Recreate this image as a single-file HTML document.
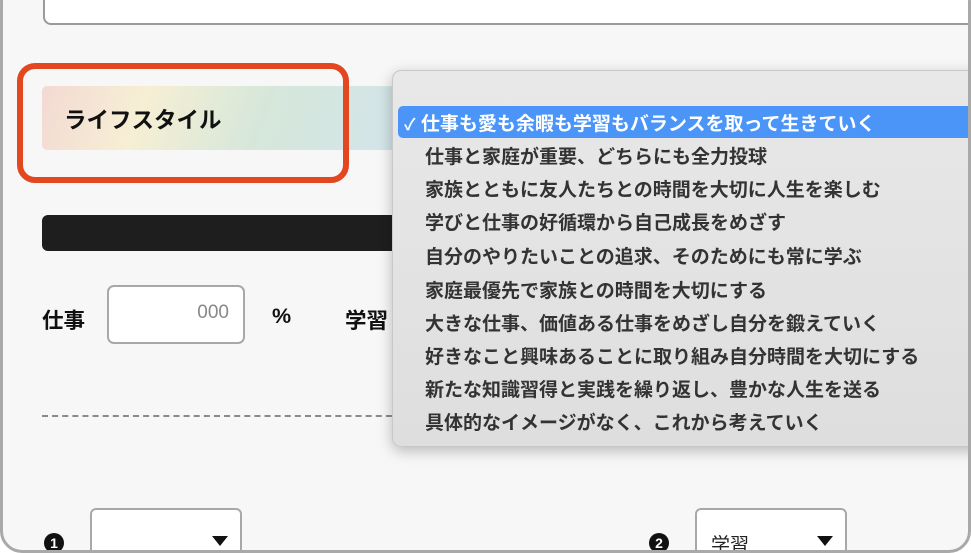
<!DOCTYPE html>
<html><head><meta charset="utf-8"><style>
body{margin:0;width:971px;height:552px;overflow:hidden;background:#fff;font-family:"Liberation Sans","Noto Sans CJK JP",sans-serif;}
.frame{position:absolute;left:0;top:-20px;width:965px;height:567px;border:3px solid #a9a9a9;border-radius:22px;background:#f7f7f7;overflow:hidden;}
.abs{position:absolute;}
.topbox{left:40px;top:0;width:960px;height:38px;background:#fff;border:2px solid #9a9a9a;border-radius:8px;}
.band{left:39px;top:103px;width:360px;height:64px;border-radius:5px;background:linear-gradient(110deg,#f3d9d3 0%,#f6efd4 28%,#d6e7da 60%,#d2e4ea 100%);}
.band span{position:absolute;left:22px;top:17px;font-size:22.5px;font-weight:bold;color:#111;}
.red{left:14px;top:80px;width:320px;height:108px;border:6px solid #e2471f;border-radius:18px;}
.bar{left:39px;top:232px;width:360px;height:36px;background:#1e1e1e;border-radius:6px;}
.lbl{font-size:21.5px;font-weight:bold;color:#111;}
.inp{left:104px;top:302px;width:134px;height:55px;background:#fff;border:2px solid #a8a8a8;border-radius:7px;}
.inp span{position:absolute;right:14px;top:15px;font-size:19px;color:#888;}
.dash{left:39px;top:432px;width:360px;border-top:2px dashed #8a8a8a;}
.sel{width:148px;height:60px;background:#fff;border:2px solid #a8a8a8;border-radius:6px;}
.tri{position:absolute;right:12px;top:26px;width:0;height:0;border-left:8px solid transparent;border-right:8px solid transparent;border-top:10px solid #111;}
.num{width:20px;height:20px;border-radius:50%;background:#111;color:#fff;font-size:14px;font-weight:bold;text-align:center;line-height:20px;}
.dd{left:389px;top:87px;width:600px;height:375px;border:1px solid #c8c8c8;border-radius:9px;background:linear-gradient(#e8e8e8,#dedede);box-shadow:0 4px 14px rgba(0,0,0,.25);}
.dd div{position:absolute;left:32px;font-size:19px;font-weight:bold;color:#333;white-space:nowrap;}
.hl{left:5px!important;top:35px;width:600px;height:32px;background:#4a95f7;border-radius:5px;color:#fff!important;}
.hl span{position:absolute;left:6px;top:3px;}
</style></head><body>
<div class="frame">
<div class="abs topbox"></div>
<div class="abs band"><span>ライフスタイル</span></div>
<div class="abs bar"></div>
<div class="abs lbl" style="left:39px;top:321px">仕事</div>
<div class="abs inp"><span>000</span></div>
<div class="abs lbl" style="left:269px;top:321px">%</div>
<div class="abs lbl" style="left:342px;top:321px">学習</div>
<div class="abs dash"></div>
<div class="abs num" style="left:41px;top:550px">1</div>
<div class="abs sel" style="left:87px;top:525px"><div class="tri"></div></div>
<div class="abs num" style="left:646px;top:550px">2</div>
<div class="abs sel" style="left:692px;top:525px"><span style="position:absolute;left:14px;top:20px;font-size:19px;color:#222">学習</span><div class="tri"></div></div>
<div class="abs dd">
<div class="hl"><span><span style="position:static;font-size:16px">✓</span> 仕事も愛も余暇も学習もバランスを取って生きていく</span></div>
<div style="top:71px">仕事と家庭が重要、どちらにも全力投球</div>
<div style="top:104px">家族とともに友人たちとの時間を大切に人生を楽しむ</div>
<div style="top:137px">学びと仕事の好循環から自己成長をめざす</div>
<div style="top:171px">自分のやりたいことの追求、そのためにも常に学ぶ</div>
<div style="top:205px">家庭最優先で家族との時間を大切にする</div>
<div style="top:238px">大きな仕事、価値ある仕事をめざし自分を鍛えていく</div>
<div style="top:271px">好きなこと興味あることに取り組み自分時間を大切にする</div>
<div style="top:304px">新たな知識習得と実践を繰り返し、豊かな人生を送る</div>
<div style="top:337px">具体的なイメージがなく、これから考えていく</div>
</div>
<div class="abs red"></div>
</div>
</body></html>
